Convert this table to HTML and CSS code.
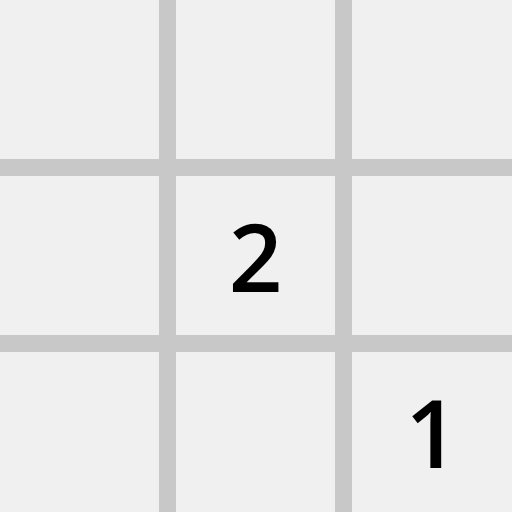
FILE: index.html
```html
<!DOCTYPE html>
<html>
<head>
<meta charset="utf-8">
<link rel="stylesheet" href="styles.css">
</head>
<body>
<div class="board">
  <div class="cell"></div>
  <div class="cell"></div>
  <div class="cell"></div>
  <div class="cell"></div>
  <div class="cell">2</div>
  <div class="cell"></div>
  <div class="cell"></div>
  <div class="cell"></div>
  <div class="cell">1</div>
</div>
</body>
</html>
```
FILE: styles.css
```css
html, body {
  margin: 0;
  padding: 0;
  width: 512px;
  height: 512px;
  overflow: hidden;
}
.board {
  display: grid;
  grid-template-columns: 159px 159px 160px;
  grid-template-rows: 159px 159px 160px;
  gap: 17px;
  width: 512px;
  height: 512px;
  background: #c8c8c8;
}
.cell {
  background: #f0f0f0;
  display: flex;
  align-items: center;
  justify-content: center;
  font-family: "Open Sans", sans-serif;
  font-weight: 600;
  font-size: 94px;
  color: #000;
  line-height: 1;
}
```
